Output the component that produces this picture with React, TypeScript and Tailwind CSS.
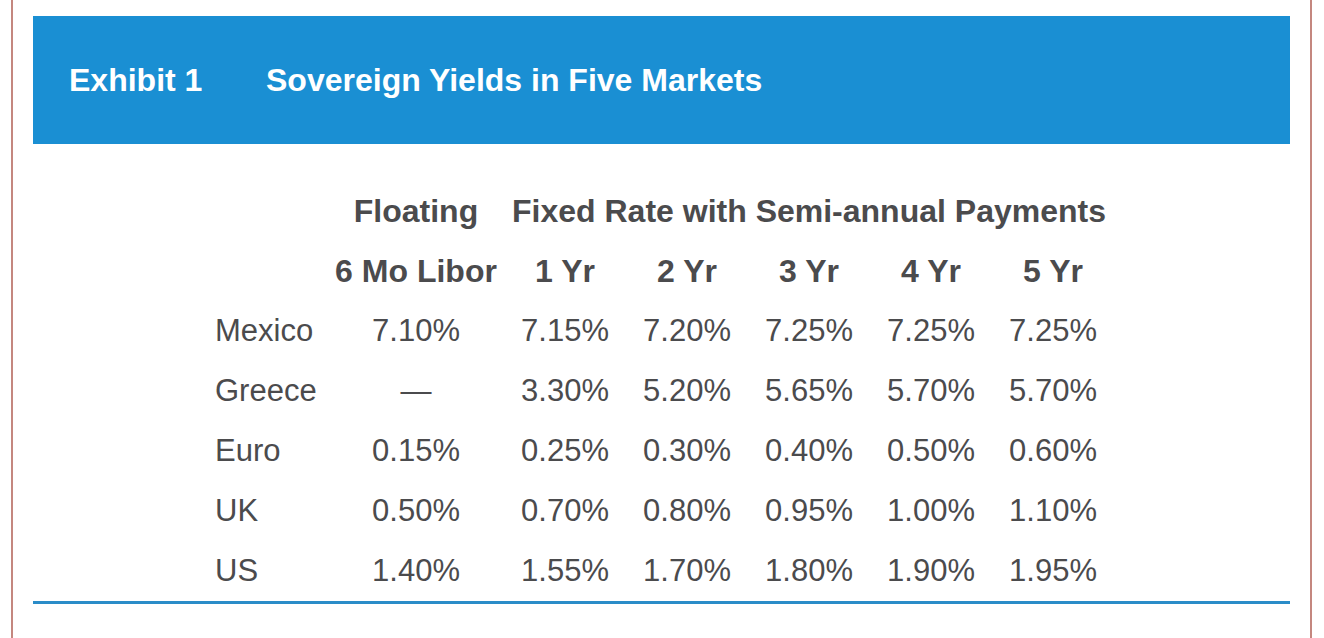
const fixedCols = ["1 Yr", "2 Yr", "3 Yr", "4 Yr", "5 Yr"];

const rows: { name: string; floating: string; fixed: string[] }[] = [
  { name: "Mexico", floating: "7.10%", fixed: ["7.15%", "7.20%", "7.25%", "7.25%", "7.25%"] },
  { name: "Greece", floating: "—", fixed: ["3.30%", "5.20%", "5.65%", "5.70%", "5.70%"] },
  { name: "Euro", floating: "0.15%", fixed: ["0.25%", "0.30%", "0.40%", "0.50%", "0.60%"] },
  { name: "UK", floating: "0.50%", fixed: ["0.70%", "0.80%", "0.95%", "1.00%", "1.10%"] },
  { name: "US", floating: "1.40%", fixed: ["1.55%", "1.70%", "1.80%", "1.90%", "1.95%"] },
];

export default function App() {
  return (
    <div className="w-[1324px] h-[638px] bg-white overflow-hidden font-['Liberation_Sans',Arial,sans-serif]">
      <div className="ml-[11px] w-[1301px] h-full border-x-2 border-[#c4877f] px-[20px] pt-[16px]">
        {/* title bar */}
        <div className="h-[128px] bg-[#1a8fd3] flex items-center pl-[36px] text-white font-bold text-[32px] leading-none">
          <span className="w-[197px]">Exhibit 1</span>
          <span>Sovereign Yields in Five Markets</span>
        </div>

        {/* table */}
        <div className="mt-[37px] ml-[182px] grid grid-cols-[113px_176px_repeat(5,122px)] text-[31px] leading-[60px] text-[#4b4b4d]">
          <div />
          <div className="font-bold text-[32px] text-center">Floating</div>
          <div className="col-span-5 font-bold text-[32px] text-center whitespace-nowrap">Fixed Rate with Semi-annual Payments</div>

          <div />
          <div className="font-bold text-[32px] text-center whitespace-nowrap">6 Mo Libor</div>
          {fixedCols.map((c) => (
            <div key={c} className="font-bold text-[32px] text-center">{c}</div>
          ))}

          {rows.map((r) => (
            <div key={r.name} className="contents">
              <div>{r.name}</div>
              <div className="text-center">{r.floating}</div>
              {r.fixed.map((v, i) => (
                <div key={i} className="text-center">{v}</div>
              ))}
            </div>
          ))}
        </div>

        <div className="h-[3px] bg-[#2a8cc8]" />
      </div>
    </div>
  );
}
